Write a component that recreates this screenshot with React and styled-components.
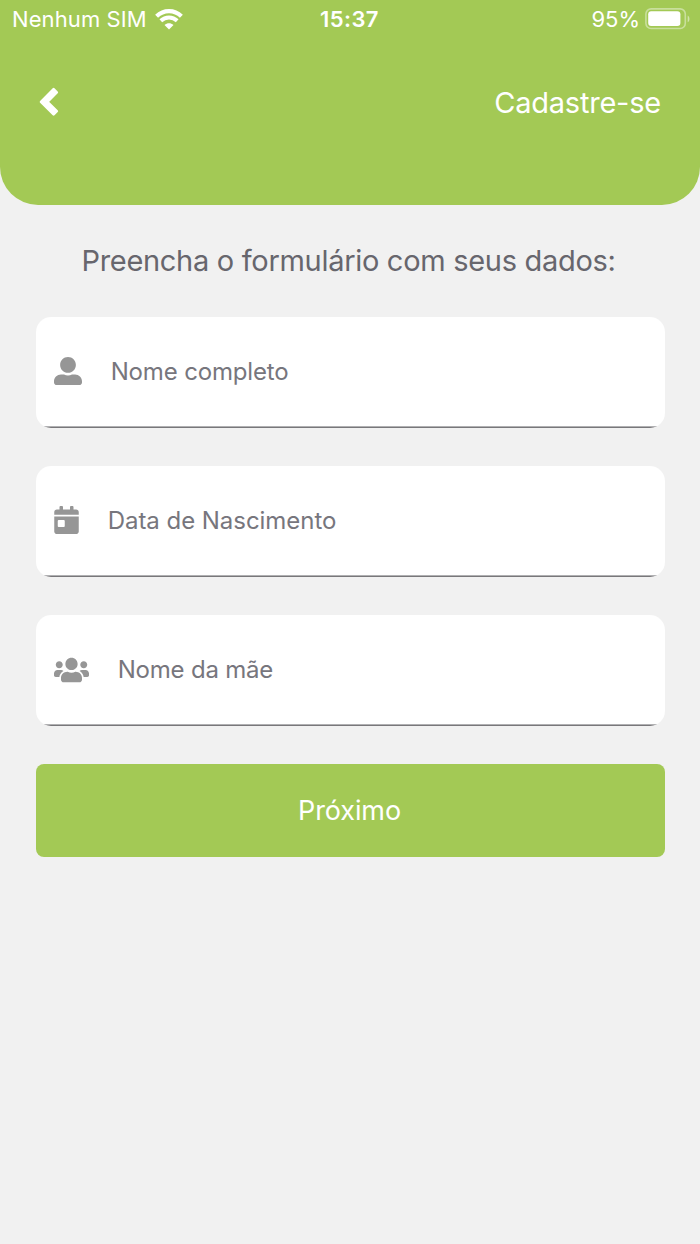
import React from "react";
import styled, { createGlobalStyle } from "styled-components";
import { FaCalendarDay, FaUserAlt, FaUsers } from "react-icons/fa";

const fields = [
  { name: "nome", label: "Nome completo", icon: FaUserAlt, width: 28, spacing: -0.16 },
  { name: "nascimento", label: "Data de Nascimento", icon: FaCalendarDay, width: 25, spacing: -0.04 },
  { name: "mae", label: "Nome da mãe", icon: FaUsers, width: 35, spacing: -0.2 },
];

const App = () => {
  return (
    <Screen>
      <GlobalStyle />
      <Header>
        <StatusBar>
          <Carrier>
            Nenhum SIM
            <WifiIcon />
          </Carrier>
          <Clock>15:37</Clock>
          <Battery>
            95%
            <BatteryIcon />
          </Battery>
        </StatusBar>
        <NavBar>
          <BackButton aria-label="Voltar">
            <ChevronIcon />
          </BackButton>
          <NavTitle>Cadastre-se</NavTitle>
        </NavBar>
      </Header>
      <Form>
        <FormTitle>Preencha o formulário com seus dados:</FormTitle>
        {fields.map(({ name, label, icon: Icon, width, spacing }) => (
          <Field key={name}>
            <FieldIcon $width={width}>
              <Icon />
            </FieldIcon>
            <FieldLabel $spacing={spacing}>{label}</FieldLabel>
          </Field>
        ))}
        <SubmitButton>Próximo</SubmitButton>
      </Form>
    </Screen>
  );
};

const WifiIcon = () => (
  <svg width="28" height="21" viewBox="0 0 28 21" fill="none" stroke="#fff">
    <path d="M1.6 7.2 C8.6 0.4 19.4 0.4 26.4 7.2" strokeWidth="4.2" />
    <path d="M5.8 11.8 C10.5 7.4 17.5 7.4 22.2 11.8" strokeWidth="4" />
    <path d="M14 20.4 L9.5 16 C12.2 13.6 15.8 13.6 18.5 16 Z" fill="#fff" stroke="none" />
  </svg>
);

const BatteryIcon = () => (
  <svg width="45" height="22" viewBox="0 0 45 22" fill="none">
    <rect x="0.9" y="0.9" width="39.4" height="19.6" rx="5.2" stroke="#fff" strokeOpacity="0.42" strokeWidth="1.6" />
    <rect x="3.2" y="3.2" width="32.2" height="14.8" rx="3" fill="#fff" />
    <path d="M42.7 7.4 C45 8.6 45 13 42.7 14.2 Z" fill="#fff" fillOpacity="0.5" />
  </svg>
);

const ChevronIcon = () => (
  <svg width="20" height="30" viewBox="0 0 20 30" fill="#fff" stroke="#fff" strokeWidth="2.6" strokeLinejoin="round">
    <path d="M2 14.8 L14.6 2.2 L17.8 5.4 L8.4 14.8 L17.8 24.2 L14.6 27.4 Z" />
  </svg>
);

const GlobalStyle = createGlobalStyle`
  * {
    box-sizing: border-box;
  }
  body {
    margin: 0;
    background: #f1f1f1;
    font-family: Inter, "Liberation Sans", sans-serif;
  }
`;

const Screen = styled.div`
  display: flex;
  flex-direction: column;
  min-height: 1244px;
  background: #f1f1f1;
`;

const Header = styled.header`
  height: 205px;
  background: #a3c955;
  border-radius: 0 0 38px 38px;
  color: #fff;
`;

const StatusBar = styled.div`
  display: grid;
  grid-template-columns: 1fr auto 1fr;
  align-items: center;
  height: 38px;
  padding: 0 10px 0 12px;
  font-size: 22px;
  line-height: 38px;
`;

const Carrier = styled.div`
  display: flex;
  align-items: center;
  gap: 8px;
  letter-spacing: 0.1px;
`;

const Clock = styled.div`
  margin-right: 3px;
  font-weight: 600;
  letter-spacing: 0.4px;
`;

const Battery = styled.div`
  display: flex;
  align-items: center;
  justify-content: flex-end;
  gap: 5px;
`;

const NavBar = styled.nav`
  display: flex;
  align-items: center;
  justify-content: space-between;
  height: 128px;
  padding: 0 39px;
`;

const BackButton = styled.button`
  display: flex;
  padding: 0;
  border: 0;
  background: none;
  color: inherit;
`;

const NavTitle = styled.h1`
  margin: 2px 0 0;
  font-size: 29px;
  font-weight: 400;
  letter-spacing: -0.22px;
  line-height: 40px;
`;

const Form = styled.form`
  display: flex;
  flex-direction: column;
  padding: 0 35px 0 36px;
`;

const FormTitle = styled.h2`
  margin: 36px 4px 35.5px 0;
  color: #67666d;
  font-size: 29px;
  font-weight: 400;
  letter-spacing: -0.3px;
  line-height: 40px;
  text-align: center;
  white-space: nowrap;
`;

const Field = styled.label`
  display: flex;
  align-items: center;
  gap: 28.7px;
  height: 111.5px;
  margin-bottom: 37.7px;
  padding: 0 0 2px 18px;
  border-radius: 15px;
  background: linear-gradient(#b0b0b2 50%, #78777a 50%) left bottom / 100% 2px no-repeat #fff;
`;

const FieldIcon = styled.span`
  display: flex;
  width: ${(props) => props.$width}px;
  color: #969696;

  svg {
    width: 100%;
    height: 28px;
  }
`;

const FieldLabel = styled.span`
  color: #77767d;
  font-size: 24px;
  letter-spacing: ${(props) => props.$spacing}px;
`;

const SubmitButton = styled.button`
  height: 92.5px;
  padding: 0 2px 0 0;
  border: 0;
  border-radius: 8px;
  background: #a3c955;
  color: #fff;
  font-family: inherit;
  font-size: 27px;
  letter-spacing: -0.1px;
`;

export default App;
